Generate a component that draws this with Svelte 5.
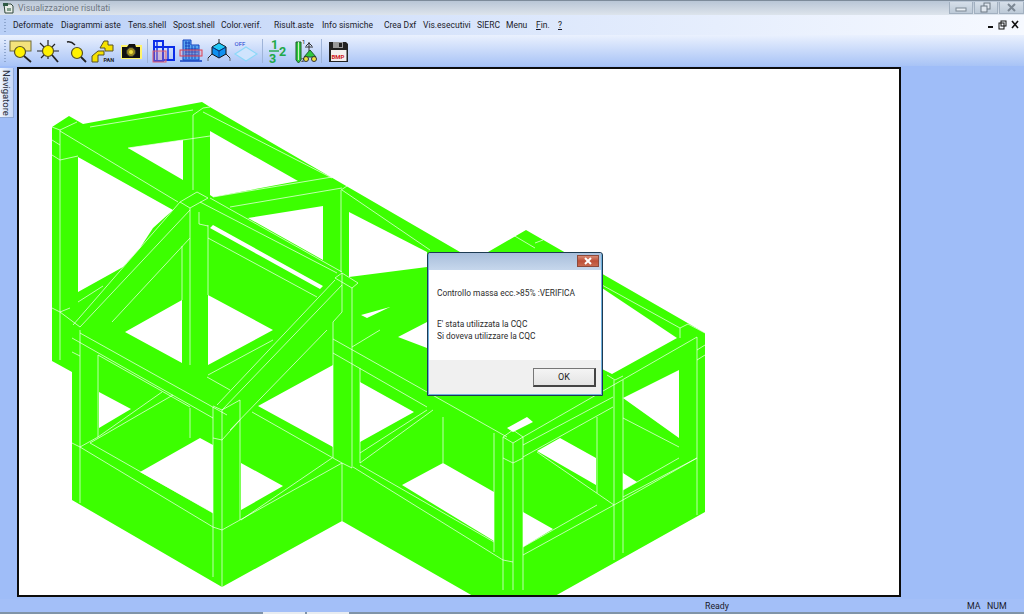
<script>
  const menus = ['Deformate', 'Diagrammi aste', 'Tens.shell', 'Spost.shell', 'Color.verif.', 'Risult.aste', 'Info sismiche', 'Crea Dxf', 'Vis.esecutivi', 'SIERC', 'Menu'];

  // frame silhouette, in page coordinates (the svg viewBox starts at the canvas corner)
  const outer = '52,127 69,116 83,124 202,102 210,107 460,252 488,252 526,230 705,333 705,512 555,596 473,596 342,521 222,587 72,500 72,372 52,361';
  const holes = [
    '78,157 173,210 153,228 140,248 123,267 78,292',
    '128,148 183,140 183,180',
    '210,131 298,181 213,197 210,195',
    '248,218 323,206 323,260',
    '349,212 427,252 427,267 349,277',
    '213,225 323,286 320,289 210,228',
    '208,295 273,330 208,365',
    '125,332 182,300 182,363',
    '99,392 131,409 99,428',
    '140,472 200,438 213,445 213,513',
    '241,463 283,486 241,510',
    '258,406 333,365 333,447',
    '361,315 390,307 367,318',
    '398,337 427,322 427,348',
    '360,382 414,412 360,442',
    '402,485 443,463 494,492 494,541',
    '523,512 553,529 523,547',
    '537,451 560,438 596,458 596,485',
    '623,473 637,482 623,490',
    '623,398 679,370 679,438',
    '507,428 527,417 533,422 513,432',
    '602,288 677,338 612,374 602,369'
  ];
  const lines = [
    '60,130 60,360', '52,127 60,130 77,122', '60,131 178,202', '52,155 60,160 78,156', '52,140 60,145',
    '90,127 193,110', '128,148 210,136', '193,115 193,190', '193,115 203,108 210,107', '203,112 332,178',
    '213,197 332,177', '230,207 342,188', '341,190 341,272', '341,190 347,186',
    '180,202 197,192 208,198 190,208 180,202', '200,202 337,273', '210,198 342,272',
    '199,212 199,224 208,226', '190,208 190,365', '208,225 208,295', '182,246 182,300',
    '180,202 73,325', '190,210 80,327', '190,238 112,322', '208,238 317,297', '78,302 103,286',
    '52,308 60,312 80,327', '70,308 60,312', '342,285 222,410', '335,280 217,405', '333,322 333,458',
    '335,278 342,273 358,283 352,288 335,278', '342,273 342,312 333,322', '352,288 352,468',
    '80,330 80,503', '98,355 98,437', '80,333 227,415', '72,338 213,418', '72,352 80,356', '98,355 190,407',
    '213,407 213,577', '222,410 222,587', '213,406 222,410 240,400', '240,400 240,520', '213,438 222,440 240,420',
    '230,430 327,330', '207,377 230,390', '208,375 273,340', '190,408 190,438',
    '80,447 213,527 222,530', '90,443 213,513', '72,443 80,447 98,437', '90,443 173,395', '98,437 162,392',
    '222,530 342,463', '241,520 332,458', '252,412 333,458', '342,463 342,521', '333,458 342,463 352,468',
    '360,368 360,463', '333,339 507,437', '333,353 427,407', '352,347 380,330',
    '360,463 433,410', '360,453 427,410', '443,417 443,463',
    '360,465 494,542', '353,467 503,560 513,562', '503,437 513,430 523,437 513,443 503,437',
    '494,433 494,552', '503,437 503,590', '513,443 513,590', '523,437 523,590', '503,458 513,463 523,458',
    '523,437 697,337', '523,445 613,397', '523,457 613,407', '614,380 614,560', '623,380 623,553', '597,417 597,493',
    '607,375 615,380 623,376', '523,555 614,505', '523,547 597,505', '623,497 697,458', '623,490 679,458',
    '614,505 697,458', '623,418 679,447', '614,505 537,452', '697,337 697,515',
    '697,350 705,345', '697,360 705,355', '680,328 680,338', '602,285 680,328', '680,328 688,324', '688,324 705,333',
    '513,235 535,248', '535,243 543,240', '430,250 342,190'
  ];

  const holesPath = holes.map((h) => 'M' + h + 'Z').join(' ');
</script>

<div class="window">
  <header class="titlebar">
    <svg class="appicon" viewBox="0 0 12 12" width="12" height="12">
      <path d="M2 2h7l2 2v7H3z" fill="#e8ece8" stroke="#30483c" />
      <path d="M1 1h5v3H1z" fill="#2f5a45" />
      <path d="M5 6h4v3H5z" fill="#7fa08c" />
    </svg>
    <span class="title">Visualizzazione risultati</span>
    <div class="winbtns">
      <div class="winbtn">
        <svg viewBox="0 0 22 11" width="22" height="11"><rect x="6" y="6" width="10" height="3" fill="#e8eef4" stroke="#7c8894" /></svg>
      </div>
      <div class="winbtn">
        <svg viewBox="0 0 21 11" width="21" height="11"><rect x="9" y="1" width="6" height="6" fill="#dfe6ee" stroke="#6c7884" /><rect x="6" y="4" width="6" height="6" fill="#dfe6ee" stroke="#6c7884" /></svg>
      </div>
      <div class="winbtn closebtn">
        <svg viewBox="0 0 23 11" width="23" height="11"><path d="M8 2l7 7M15 2l-7 7" stroke="#7c8894" stroke-width="2" /></svg>
      </div>
    </div>
  </header>

  <nav class="menubar">
    <div class="grip"></div>
    <div class="menus">
      {#each menus as m}
        <span>{m}</span>
      {/each}
      <span><u>F</u>in.</span>
      <span><u>?</u></span>
    </div>
    <div class="mdibtns">
      <svg viewBox="0 0 32 10" width="32" height="10">
        <rect x="0" y="6" width="5" height="2" fill="#111" />
        <rect x="11" y="3" width="5" height="6" fill="none" stroke="#111" />
        <rect x="13" y="1" width="5" height="5" fill="none" stroke="#111" />
        <path d="M24 1l6 7M30 1l-6 7" stroke="#111" stroke-width="1.6" />
      </svg>
    </div>
  </nav>

  <div class="toolbar">
    <div class="grip tgrip"></div>

    <!-- zoom window -->
    <svg class="tool" viewBox="0 0 24 24">
      <rect x="1" y="2" width="21" height="10" fill="#f3e27c" stroke="#6e6a3a" />
      <circle cx="11" cy="13" r="5.5" fill="#fff200" stroke="#55502a" stroke-width="1.2" />
      <path d="M15 17l7 6" stroke="#222" stroke-width="1.8" />
    </svg>
    <!-- zoom all -->
    <svg class="tool" viewBox="0 0 24 24">
      <circle cx="12" cy="12" r="5.5" fill="#fff200" stroke="#55502a" stroke-width="1.2" />
      <path d="M12 6V1M12 18v2M6 12H1M18 12h5M8 8L4 4M16 8l3-3M8 16l-3 3" stroke="#222" stroke-width="1.2" />
      <path d="M16 16l6 7" stroke="#222" stroke-width="1.8" />
    </svg>
    <!-- previous zoom -->
    <svg class="tool" viewBox="0 0 24 24">
      <path d="M3 3q4-1 8 3" fill="none" stroke="#222" stroke-width="1.6" />
      <circle cx="13" cy="14" r="5.5" fill="#fff200" stroke="#55502a" stroke-width="1.2" />
      <path d="M17 18l5 5" stroke="#222" stroke-width="1.8" />
    </svg>
    <!-- pan -->
    <svg class="tool" viewBox="0 0 24 24">
      <path d="M9 9l4-7h4v4h5v6h-8V9z" fill="#f6e100" stroke="#55502a" />
      <path d="M1 17l6-5h6v4H7v7H1z" fill="#f6e100" stroke="#55502a" />
      <text x="12.500" y="22.500" class="pan">PAN</text>
    </svg>
    <!-- camera -->
    <svg class="tool" viewBox="0 0 24 24">
      <rect x="2" y="6" width="21" height="14" fill="#fff36a" />
      <path d="M3 8h5l2-3h6l1 3h4v11H3z" fill="#111" />
      <circle cx="12" cy="13" r="4.5" fill="#9a8a20" stroke="#333" />
      <circle cx="12" cy="13" r="2" fill="#f0e040" />
    </svg>

    <div class="sep"></div>

    <!-- frame + red box -->
    <svg class="tool" viewBox="0 0 24 24">
      <path d="M2 2h9v20H2zM2 8h9M11 8h11v13H11" fill="none" stroke="#0a2ce8" stroke-width="2" />
      <path d="M5 2v20M16 8v13" stroke="#0a2ce8" stroke-width="1.4" />
      <rect x="1" y="12" width="13" height="11" fill="#f08090" fill-opacity=".3" stroke="#e06070" />
    </svg>
    <!-- building -->
    <svg class="tool" viewBox="0 0 24 24">
      <path d="M4 1h8v5h8v15H4z" fill="#5aa8f0" stroke="#1040c0" />
      <path d="M6 4h5M6 7h5M6 10h13M6 13h13M6 16h13M7 2v18M10 2v18M13 7v13M16 7v13" stroke="#0b2fb0" stroke-width=".8" />
      <path d="M1 22h22" stroke="#1040c0" stroke-width="1.5" />
      <rect x="1" y="11" width="22" height="6" fill="#f08090" fill-opacity=".2" stroke="#e04050" />
    </svg>
    <!-- cube and axes -->
    <svg class="tool" viewBox="0 0 24 24">
      <path d="M12 4l7 4v7l-7 4-7-4V8z" fill="#1090f0" stroke="#111" />
      <path d="M12 4l7 4-7 4-7-4z" fill="#20c8f8" stroke="#111" stroke-width=".6" />
      <path d="M12 12v7M5 8l7 4 7-4" stroke="#0a2a80" fill="none" stroke-width=".8" />
      <path d="M12 4V0M5 15l-4 4M19 15l4 4" stroke="#222" />
      <path d="M1 19v3M23 19v3" stroke="#666" />
    </svg>
    <!-- shell off -->
    <svg class="tool" viewBox="0 0 24 24">
      <path d="M12 8l11 7-11 7-11-7z" fill="#cfe4fd" stroke="#8cd8f8" stroke-width="1.2" />
      <text x="0.500" y="7" class="off">OFF</text>
    </svg>

    <div class="sep sep2"></div>

    <!-- numbering -->
    <svg class="tool" viewBox="0 0 24 24">
      <text x="5" y="10" class="num">1</text>
      <path d="M3 12h10" stroke="#20a848" stroke-width="1.4" />
      <text x="3" y="24" class="num">3</text>
      <text x="13" y="17" class="num">2</text>
    </svg>
    <!-- member ends -->
    <svg class="tool" viewBox="0 0 24 24">
      <path d="M2 3h5v18l-2.500 3L2 21z" fill="#2cc83c" stroke="#1c5c28" />
      <path d="M4.500 3v18" stroke="#d0f0c0" />
      <path d="M15 3v9M12 7l3-3 3 3" fill="none" stroke="#333" />
      <path d="M11 8h8" stroke="#333" />
      <path d="M16 11l6 7H10z" fill="#30c840" stroke="#1c5c28" />
      <circle cx="12" cy="20" r="2.500" fill="#f0e040" stroke="#333" />
      <circle cx="20" cy="20" r="2.500" fill="#f0e040" stroke="#333" />
      <text x="8" y="5" class="tiny">1</text>
      <text x="7" y="23" class="tiny">2</text>
    </svg>

    <div class="sep sep2"></div>

    <!-- save bmp -->
    <svg class="tool" viewBox="0 0 24 24">
      <path d="M3 3h17l2 2v18H3z" fill="#222" />
      <rect x="7" y="3" width="10" height="6" fill="#9a9a9a" />
      <rect x="13" y="4" width="3" height="4" fill="#222" />
      <rect x="5" y="11" width="15.500" height="11" fill="#f4f0ee" />
      <text x="5.500" y="19.500" class="bmp">BMP</text>
    </svg>
  </div>

  <main class="workspace">
    <div class="navcol">
      <div class="navtab">Navigatore</div>
    </div>
    <div class="canvas">
      <svg viewBox="19 69 880 526" width="880" height="526">
        <path d={'M' + outer + 'Z ' + holesPath} fill="#3cff00" fill-rule="evenodd" />
        {#each lines as l}
          <polyline points={l} class="edge" />
        {/each}
      </svg>
    </div>
  </main>

  <footer class="statusbar">
    <span></span>
    <span>Ready</span>
    <span>MA</span>
    <span>NUM</span>
  </footer>
  <div class="taskstrip">
    <div class="stripspace"></div>
    <div class="striptab"></div>
    <div class="striptab"></div>
  </div>

  <div class="dialog">
    <div class="dlgtitle">
      <div class="dlgclose">
        <svg viewBox="0 0 22 12" width="22" height="12"><path d="M8 3l6 6M14 3l-6 6" stroke="#fff" stroke-width="2" /></svg>
      </div>
    </div>
    <div class="dlgbody">
      <p class="first">Controllo massa ecc.&gt;85% :VERIFICA</p>
      <p class="second">E' stata utilizzata la CQC</p>
      <p>Si doveva utilizzare la CQC</p>
    </div>
    <div class="dlgfoot">
      <button>OK</button>
    </div>
  </div>
</div>

<style>
  :global(body) {
    margin: 0;
    overflow: hidden;
  }

  .window {
    position: relative;
    width: 1024px;
    height: 614px;
    display: flex;
    flex-direction: column;
    overflow: hidden;
    background: #9fbdf8;
    font-family: Roboto, "Liberation Sans", sans-serif;
    font-size: 8.5px;
    color: #1a1a2a;
  }

  .titlebar {
    height: 15px;
    flex: none;
    display: flex;
    align-items: center;
    box-sizing: border-box;
    border-top: 1px solid #7d8b9a;
    background: linear-gradient(#b9c6d6, #dde4ec);
    padding-left: 2px;
  }

  .appicon {
    flex: none;
  }

  .title {
    margin-left: 4px;
    color: #6d7682;
    font-size: 8.8px;
  }

  .winbtns {
    margin-left: auto;
    display: flex;
    gap: 1px;
    align-self: flex-start;
    margin-top: 1px;
  }

  .winbtn {
    width: 22px;
    height: 11px;
    border: 1px solid #a2b0c0;
    border-top: none;
    box-sizing: content-box;
    background: linear-gradient(#d6dfe9, #bdcad8);
  }

  .closebtn {
    width: 23px;
  }

  .menubar {
    height: 20px;
    flex: none;
    display: flex;
    align-items: center;
    background: linear-gradient(90deg, #b9cff6, #d6e3fb 40%, #f6f9ff);
  }

  .grip {
    width: 2px;
    height: 13px;
    margin-left: 4px;
    flex: none;
    background: repeating-linear-gradient(#8ea6cf 0 1px, transparent 1px 3px);
  }

  .menus {
    display: grid;
    grid-template-columns: 48px 67px 45px 48px 53px 48px 62px 39px 54px 29px 30px 22px 12px;
    margin-left: 7px;
    white-space: nowrap;
  }

  .mdibtns {
    margin-left: auto;
    margin-right: 4px;
    display: flex;
  }

  .toolbar {
    height: 31px;
    flex: none;
    box-sizing: border-box;
    display: flex;
    align-items: center;
    background: linear-gradient(#eaf1fe, #a8c3f6);
  }

  .tgrip {
    height: 22px;
    margin-right: 1px;
  }

  .tool {
    width: 24px;
    height: 24px;
    flex: none;
    margin: 0 1.75px;
    overflow: visible;
  }

  .pan {
    font-size: 5.500px;
    font-weight: bold;
    fill: #222;
  }

  .off {
    font-size: 6px;
    fill: #2040d0;
  }

  .num {
    font-size: 12.500px;
    font-weight: bold;
    fill: #20a848;
  }

  .tiny {
    font-size: 6px;
    fill: #222;
  }

  .bmp {
    font-size: 6px;
    font-weight: bold;
    fill: #d02020;
  }

  .sep {
    width: 1px;
    height: 24px;
    flex: none;
    margin: 0 2.25px;
    background: #9fb4d8;
  }

  .sep2 {
    margin: 0 1.75px;
  }

  .workspace {
    flex: 1;
    min-height: 0;
    display: flex;
    padding-top: 1px;
  }

  .navcol {
    width: 17px;
    flex: none;
    padding-top: 1px;
  }

  .navtab {
    width: 14px;
    height: 50px;
    box-sizing: border-box;
    writing-mode: vertical-rl;
    text-align: center;
    line-height: 13px;
    font-size: 9.500px;
    background: linear-gradient(90deg, #f0f5fe, #c5d6f6);
    border-right: 1px solid #8fa8d4;
    border-bottom: 1px solid #8fa8d4;
    color: #2a3040;
  }

  .canvas {
    width: 884px;
    height: 530px;
    box-sizing: border-box;
    border: 2px solid #0c0c0c;
    background: #fff;
    flex: none;
  }

  .canvas svg {
    display: block;
  }

  .edge {
    fill: none;
    stroke: #fff;
    stroke-width: 0.8;
    stroke-opacity: 0.85;
  }

  .statusbar {
    height: 13px;
    flex: none;
    display: grid;
    grid-template-columns: 705px 262px 20px auto;
    align-items: center;
    background: #a3bff8;
    font-size: 8.800px;
  }

  .taskstrip {
    height: 2px;
    flex: none;
    display: flex;
    background: #8094a8;
  }

  .stripspace {
    width: 263px;
  }

  .striptab {
    width: 42px;
    margin-right: 2px;
    background: #e8ecf0;
  }

  .dialog {
    position: absolute;
    left: 427px;
    top: 252px;
    width: 176px;
    height: 144px;
    box-sizing: border-box;
    display: flex;
    flex-direction: column;
    border: 1px solid #1d3a52;
    border-radius: 3px 3px 0 0;
    background: #b5c9e2;
    padding: 0 1px 1px;
    box-shadow: inset 0 0 0 1px #6fb0dc;
  }

  .dlgtitle {
    height: 17px;
    flex: none;
    display: flex;
    justify-content: flex-end;
    padding-right: 2px;
    background: linear-gradient(#a8bedb, #c6d7ec);
  }

  .dlgclose {
    width: 22px;
    height: 12px;
    margin-top: 2px;
    background: linear-gradient(#d88a74, #bd4f38 50%, #c96a50);
    border: 1px solid #8c4a3c;
    box-sizing: border-box;
    overflow: hidden;
  }

  .dlgclose svg {
    display: block;
    margin: -1px;
  }

  .dlgbody {
    flex: 1;
    background: #fff;
    padding: 17px 0 0 8px;
    color: #2c2c2c;
    font-size: 8.400px;
    line-height: 12px;
  }

  .dlgbody p {
    margin: 0;
  }

  .dlgbody .first {
    margin-bottom: 19px;
  }

  .dlgfoot {
    height: 34px;
    flex: none;
    background: #f0f0f0;
    display: flex;
    justify-content: flex-end;
    align-items: flex-start;
    padding: 8px 5px 0 0;
    box-sizing: border-box;
  }

  .dlgfoot button {
    width: 63px;
    height: 19px;
    padding: 0;
    font: inherit;
    font-size: 9px;
    color: #222;
    background: linear-gradient(#f4f4f4, #e4e4e4);
    border: 1px solid #777;
    border-right: 2px solid #444;
    border-bottom: 2px solid #444;
  }
</style>
